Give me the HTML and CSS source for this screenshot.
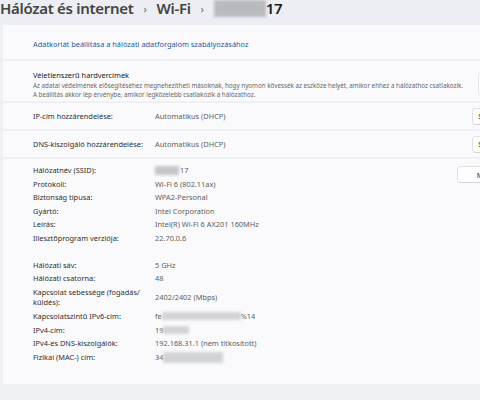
FILE: index.html
```html
<!DOCTYPE html>
<html>
	<head>
		<meta charset="utf-8">
		<title>Wi-Fi tulajdonságok</title>
		<link rel="stylesheet" href="styles.css">
	</head>
	<body>
		<!-- fejléc: morzsamenü -->
		<div class="crumbs">
			<span class="crumb">Hálózat és internet</span>
			<span class="chev">›</span>
			<span class="crumb">Wi-Fi</span>
			<span class="chev">›</span>
			<span class="crumb current"><span class="blur blur-title"></span>17</span>
		</div>

		<div class="cards">
			<div class="card card-link">
				<a class="link" href="javascript:;">Adatkorlát beállítása a hálózati adatforgalom szabályozásához</a>
			</div>

			<div class="card card-random">
				<div class="random-text">
					<div class="title">Véletlenszerű hardvercímek</div>
					<div class="desc">Az adatai védelmének elősegítéséhez megnehezítheti másoknak, hogy nyomon kövessék az eszköze helyét, amikor ehhez a hálózathoz csatlakozik.<br>A beállítás akkor lép érvénybe, amikor legközelebb csatlakozik a hálózathoz.</div>
				</div>
				<div class="select"></div>
			</div>

			<div class="card card-row">
				<span class="label">IP-cím hozzárendelése:</span>
				<span class="value">Automatikus (DHCP)</span>
				<a class="btn btn-edit" href="javascript:;">Szerkesztés</a>
			</div>

			<div class="card card-row">
				<span class="label">DNS-kiszolgáló hozzárendelése:</span>
				<span class="value">Automatikus (DHCP)</span>
				<a class="btn btn-edit" href="javascript:;">Szerkesztés</a>
			</div>

			<div class="card card-props">
				<div class="props">
					<span class="label">Hálózatnév (SSID):</span>
					<span class="value"><span class="blur blur-ssid"></span>17</span>
					<span class="label">Protokoll:</span>
					<span class="value">Wi-Fi 6 (802.11ax)</span>
					<span class="label">Biztonság típusa:</span>
					<span class="value">WPA2-Personal</span>
					<span class="label">Gyártó:</span>
					<span class="value">Intel Corporation</span>
					<span class="label">Leírás:</span>
					<span class="value">Intel(R) Wi-Fi 6 AX201 160MHz</span>
					<span class="label">Illesztőprogram verziója:</span>
					<span class="value">22.70.0.6</span>

					<span class="spacer"></span>

					<span class="label">Hálózati sáv:</span>
					<span class="value">5 GHz</span>
					<span class="label">Hálózati csatorna:</span>
					<span class="value">48</span>
					<span class="label">Kapcsolat sebessége (fogadás/<br>küldés):</span>
					<span class="value">2402/2402 (Mbps)</span>
					<span class="label">Kapcsolatszintű IPv6-cím:</span>
					<span class="value">fe<span class="blur blur-v6"></span>%14</span>
					<span class="label">IPv4-cím:</span>
					<span class="value">19<span class="blur blur-v4"></span></span>
					<span class="label">IPv4-es DNS-kiszolgálók:</span>
					<span class="value">192.168.31.1 (nem titkosított)</span>
					<span class="label">Fizikai (MAC-) cím:</span>
					<span class="value">34<span class="blur blur-mac"></span></span>
				</div>
				<a class="btn btn-copy" href="javascript:;">Másolás</a>
			</div>
		</div>
	</body>
</html>
```

FILE: styles.css
```css
*{
	margin: 0;
	padding: 0;
	box-sizing: border-box;
}

body{
	width: 480px;
	height: 400px;
	overflow: hidden;
	background-color: #eef0f4;
	font-family: "Noto Sans", "Open Sans", sans-serif;
	color: #1f1f1f;
}

/* fejléc */
.crumbs{
	height: 25px;
	padding-top: 1px;
	padding-bottom: 9px;
	display: flex;
	align-items: center;
	white-space: nowrap;
	font-size: 15px;
	line-height: 15px;
	font-weight: 600;
	letter-spacing: -0.3px;
	background-color: #eceef3;
}
.crumb{
	color: #444;
	display: flex;
	align-items: center;
}
.crumb.current{
	color: #1a1a1a;
}
.chev{
	width: 23px;
	text-align: center;
	color: #6a6a6a;
	font-size: 11px;
	font-weight: 400;
}

/* elmosott részek */
.blur{
	display: inline-block;
	background-color: #c4c5c9;
	filter: blur(1.5px);
	vertical-align: middle;
}
.blur-title{
	width: 52px;
	height: 17px;
	background-color: #b9babe;
}
.blur-ssid{
	width: 24px;
	height: 9px;
	margin-right: 1px;
}
.blur-v6{
	width: 79px;
	height: 8px;
	background-color: #d2d3d7;
}
.blur-v4{
	width: 26px;
	height: 8px;
	background-color: #d2d3d7;
}
.blur-mac{
	width: 60px;
	height: 11px;
	background-color: #d2d3d7;
}

/* kártyák */
.cards{
	width: 538px;
	margin-left: 3px;
	display: flex;
	flex-direction: column;
	gap: 2px;
}
.card{
	background-color: #fafafc;
	padding-left: 30px;
	padding-right: 16px;
	display: flex;
	align-items: center;
	font-size: 7.4px;
}
.card-link{
	height: 34px;
	padding-top: 3px;
}
.link{
	color: #1a5aa8;
	text-decoration: none;
}
.card-random{
	height: 40px;
	padding-top: 7px;
}
.random-text{
	flex: 1;
	white-space: nowrap;
}
.title{
	font-size: 7.4px;
	line-height: 11px;
	color: #222;
}
.desc{
	font-size: 6.25px;
	line-height: 9.5px;
	color: #666;
}
.select{
	width: 47px;
	height: 24px;
	margin-top: -2px;
	border: 1px solid #e2e2e6;
	border-radius: 4px;
	background-color: #fdfdfd;
}
.card-row{
	height: 26px;
}
.label{
	width: 122px;
	color: #2e2e2e;
}
.value{
	color: #5e5e5e;
}
.btn{
	margin-left: auto;
	height: 17px;
	display: flex;
	align-items: center;
	justify-content: center;
	border: 1px solid #e0e0e4;
	border-bottom-color: #d2d2d6;
	border-radius: 4px;
	background-color: #fefefe;
	color: #1f1f1f;
	text-decoration: none;
	font-size: 7.4px;
}
.btn-edit{
	width: 53px;
}

/* tulajdonságok */
.card-props{
	height: 225px;
	align-items: flex-start;
	padding-top: 6px;
}
.props{
	display: grid;
	grid-template-columns: 122px auto;
	row-gap: 3px;
	line-height: 10.6px;
	white-space: nowrap;
}
.props .label{
	width: auto;
}
.props .value{
	display: flex;
	align-items: center;
}
.spacer{
	grid-column: 1 / 3;
	height: 10px;
}
.btn-copy{
	width: 68px;
	margin-top: 1px;
}
```
